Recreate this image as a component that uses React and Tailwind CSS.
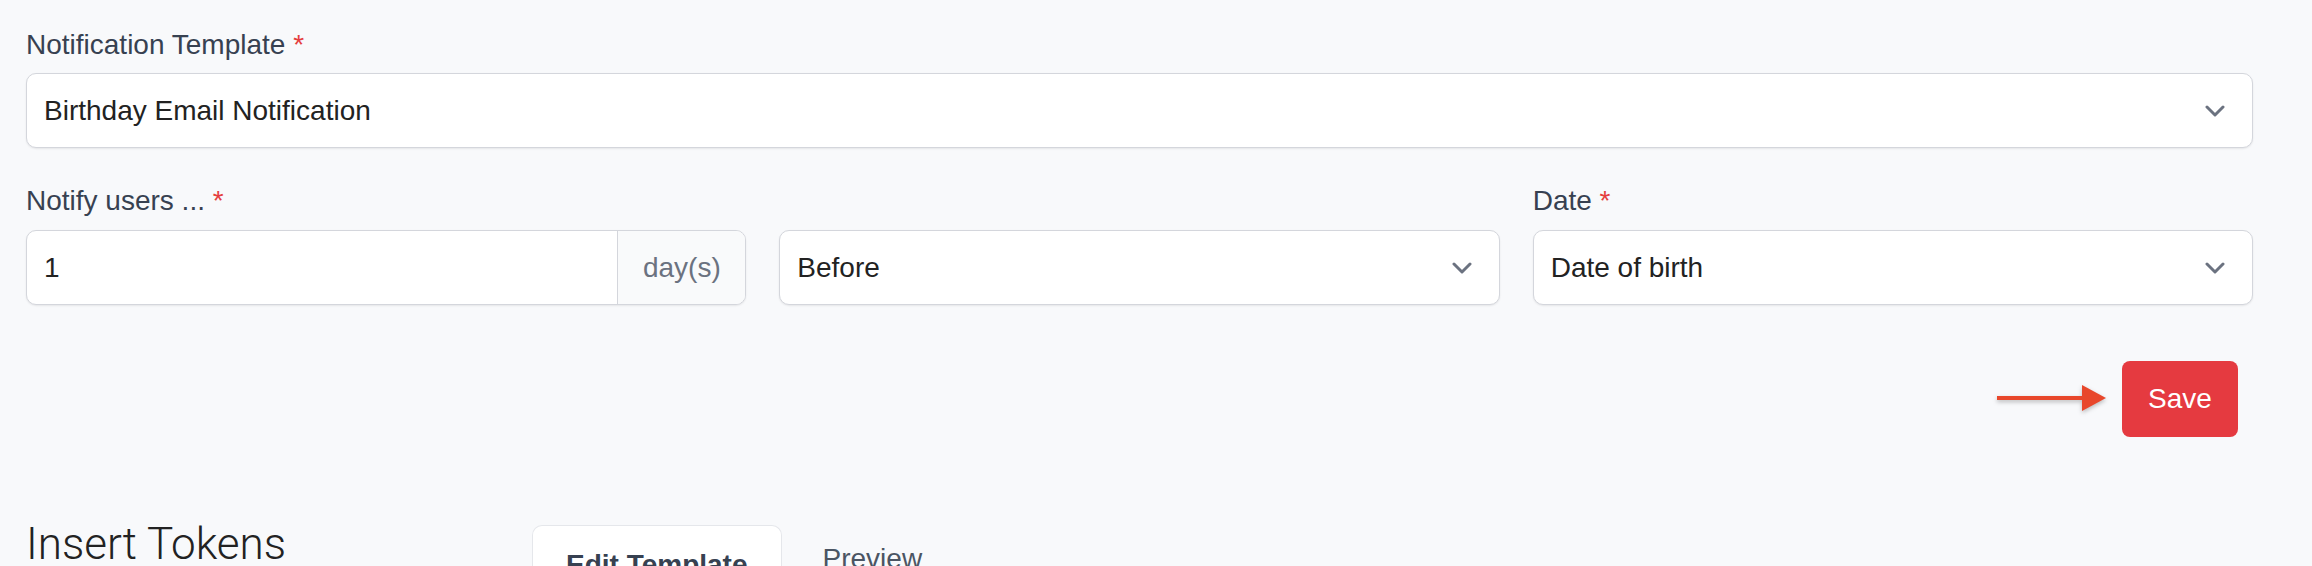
import { useState } from "react";

function Chevron() {
  return (
    <svg width="20" height="12" viewBox="0 0 20 12" fill="none" className="shrink-0">
      <path d="M2 2 L10 10 L18 2" stroke="#6b7280" strokeWidth="3" strokeLinecap="round" strokeLinejoin="round" />
    </svg>
  );
}

function Label({ children }) {
  return (
    <div className="text-[28px] leading-[40px] text-[#374151]">
      {children} <span className="text-[#e53e3e]">*</span>
    </div>
  );
}

function SelectBox({ value }) {
  return (
    <div className="flex h-[75px] items-center justify-between rounded-[10px] border border-[#d4d6dc] bg-white pl-[17px] pr-[27px] shadow-[0_1px_2px_rgba(0,0,0,0.08)]">
      <span className="text-[28px] text-[#222222]">{value}</span>
      <Chevron />
    </div>
  );
}

export default function App() {
  const [days] = useState("1");

  return (
    <div className="min-h-screen bg-[#f8f9fb] pl-[26px] pr-[59px] pt-[25px] font-['Liberation_Sans',Arial,sans-serif]">
      <div>
        <Label>Notification Template</Label>
        <div className="mt-[8px]">
          <SelectBox value="Birthday Email Notification" />
        </div>
      </div>

      <div className="mt-[33px] grid grid-cols-3 gap-x-[33px]">
        <div>
          <Label>Notify users ...</Label>
          <div className="mt-[9px] flex h-[75px] overflow-hidden rounded-[10px] border border-[#d4d6dc] bg-white shadow-[0_1px_2px_rgba(0,0,0,0.08)]">
            <div className="flex flex-1 items-center pl-[17px] text-[28px] text-[#222222]">{days}</div>
            <div className="flex w-[128px] items-center justify-center border-l border-[#d4d6dc] bg-[#f9fafb] text-[28px] text-[#6b7280]">
              day(s)
            </div>
          </div>
        </div>
        <div>
          <div className="h-[40px]" />
          <div className="mt-[9px]">
            <SelectBox value="Before" />
          </div>
        </div>
        <div>
          <Label>Date</Label>
          <div className="mt-[9px]">
            <SelectBox value="Date of birth" />
          </div>
        </div>
      </div>

      <div className="mt-[56px] flex items-center justify-end gap-[15px] pr-[15px]">
        <svg width="110" height="30" viewBox="0 0 110 30" className="drop-shadow-[0_2px_2px_rgba(0,0,0,0.25)]">
          <rect x="0" y="12" width="88" height="4" fill="#e8472b" />
          <path d="M85 1 L109 14 L85 27 Z" fill="#e8472b" />
        </svg>
        <button className="h-[76px] w-[116px] rounded-[8px] bg-[#e53a40] text-[28px] text-white">Save</button>
      </div>

      <div className="mt-[81px] flex items-start">
        <h2 className="w-[506px] font-['Roboto',sans-serif] text-[44px] font-light leading-[52px] text-[#222222]">
          Insert Tokens
        </h2>
        <div className="mt-[7px] flex items-start">
          <div className="rounded-t-[10px] border border-b-0 border-[#e5e7eb] bg-white px-[33px] pt-[19px] text-[28px] font-bold leading-[40px] text-[#374151]">
            Edit Template
          </div>
          <div className="ml-[9px] px-[32px] pt-[14px] text-[28px] leading-[40px] text-[#4b5563]">Preview</div>
        </div>
      </div>
    </div>
  );
}
